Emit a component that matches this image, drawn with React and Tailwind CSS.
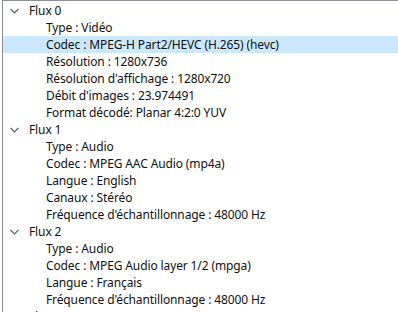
import React from "react";

const streams = [
  {
    name: "Flux 0",
    items: [
      "Type : Vidéo",
      "Codec : MPEG-H Part2/HEVC (H.265) (hevc)",
      "Résolution : 1280x736",
      "Résolution d'affichage : 1280x720",
      "Débit d'images : 23.974491",
      "Format décodé: Planar 4:2:0 YUV",
    ],
  },
  {
    name: "Flux 1",
    items: [
      "Type : Audio",
      "Codec : MPEG AAC Audio (mp4a)",
      "Langue : English",
      "Canaux : Stéréo",
      "Fréquence d'échantillonnage : 48000 Hz",
    ],
  },
  {
    name: "Flux 2",
    items: [
      "Type : Audio",
      "Codec : MPEG Audio layer 1/2 (mpga)",
      "Langue : Français",
      "Fréquence d'échantillonnage : 48000 Hz",
    ],
  },
  { name: "Flux 3", items: [] },
];

const Chevron = () => (
  <svg width="9" height="6" viewBox="0 0 9 6" className="shrink-0">
    <path d="M0.5 0.8 L4.5 4.8 L8.5 0.8" fill="none" stroke="#5a5a5a" strokeWidth="1.2" />
  </svg>
);

const App = () => {
  return (
    <div className="w-[398px] h-[312px] overflow-hidden bg-white pl-[2px]">
      <div
        className="h-full border-t border-l border-[#8c8f94] pt-[1px] text-[12px] tracking-[-0.12px] text-[#111]"
        style={{ fontFamily: '"Segoe UI", "Noto Sans", sans-serif' }}
      >
        {streams.map((s) => (
          <div key={s.name}>
            <div className="flex items-center h-[17px] pl-[7px]">
              <Chevron />
              <span className="ml-[10px] leading-[17px]">{s.name}</span>
            </div>
            {s.items.map((it, i) => (
              <div
                key={i}
                className={
                  "h-[17px] leading-[17px] pl-[43px] " +
                  (s.name === "Flux 0" && i === 1 ? "bg-[#cce8ff]" : "")
                }
              >
                <span className="whitespace-nowrap">{it}</span>
              </div>
            ))}
          </div>
        ))}
      </div>
    </div>
  );
};

export default App;
